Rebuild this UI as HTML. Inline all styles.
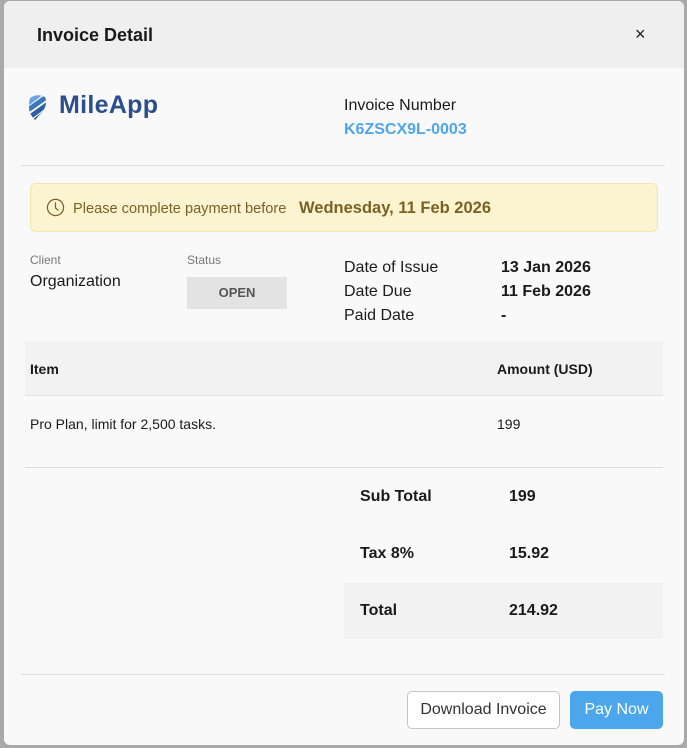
<!DOCTYPE html>
<html><head><meta charset="utf-8"><style>
*{margin:0;padding:0;box-sizing:border-box}
body{width:687px;height:748px;background:#a9a9a9;font-family:"Liberation Sans",sans-serif;position:relative;overflow:hidden;color:#1a1a1a}
.m{position:absolute;left:4px;top:1px;width:680px;height:744px;background:#f9f9f9;border-radius:6px;overflow:hidden}
.a{position:absolute;white-space:nowrap}
.hd{position:absolute;left:0;top:0;width:680px;height:67px;background:#efefef}
.hr{position:absolute;height:1px;background:#dcdcdc}
</style></head><body>
<div class="m">
<div class="hd"></div>
<div class="a" style="left:33px;top:24px;font-size:18px;font-weight:bold">Invoice Detail</div>
<div class="a" style="left:631px;top:23px;font-size:18px">×</div>
<svg class="a" style="left:24px;top:93px" width="20" height="27" viewBox="0 0 20 27">
<defs><clipPath id="c"><path d="M2 4 Q9 -1 17 3 Q20 9 15 17 L7 26 Q1 20 1 13 Q1 7 2 4Z"/></clipPath></defs>
<g clip-path="url(#c)">
<path d="M-4 8 L12 -4 L16 0 L0 12Z" fill="#6aa3dd"/>
<path d="M-3 15 L17 1 L20 5 L0 19Z" fill="#3d76bd"/>
<path d="M-1 22 L20 7 L22 11 L2 26Z" fill="#2d5da3"/>
<path d="M2 28 L20 13 L23 17 L5 31Z" fill="#23498a"/>
</g></svg>
<div class="a" style="left:55px;top:90px;font-size:25px;font-weight:bold;color:#2b4f8c;letter-spacing:0.3px">MileApp</div>
<div class="a" style="left:340px;top:96px;font-size:16px">Invoice Number</div>
<div class="a" style="left:340px;top:120px;font-size:16px;font-weight:bold;color:#4da6ec">K6ZSCX9L-0003</div>
<div class="hr" style="left:17px;top:164px;width:644px"></div>
<div class="a" style="left:26px;top:182px;width:628px;height:49px;background:#fcf3d0;border:1px solid #f4e6b0;border-radius:6px"></div>
<svg class="a" style="left:42px;top:197px" width="19" height="19" viewBox="0 0 20 20"><circle cx="10" cy="10" r="8.5" fill="none" stroke="#7a6226" stroke-width="1.3"/><path d="M10 4.5V10.5L13 13" fill="none" stroke="#7a6226" stroke-width="1.3"/></svg>
<div class="a" style="left:69px;top:200px;font-size:14.6px;color:#7a6226">Please complete payment before</div>
<div class="a" style="left:295px;top:198px;font-size:16.5px;font-weight:bold;color:#7a6226">Wednesday, 11 Feb 2026</div>
<div class="a" style="left:26px;top:252px;font-size:12px;color:#777">Client</div>
<div class="a" style="left:26px;top:272px;font-size:16px">Organization</div>
<div class="a" style="left:183px;top:252px;font-size:12px;color:#777">Status</div>
<div class="a" style="left:183px;top:276px;width:100px;height:32px;background:#e3e3e3;font-size:13px;font-weight:bold;color:#555;text-align:center;line-height:32px">OPEN</div>
<div class="a" style="left:340px;top:255px;font-size:16px;line-height:24px">Date of Issue<br>Date Due<br>Paid Date</div>
<div class="a" style="left:497px;top:255px;font-size:16px;line-height:24px;font-weight:bold">13 Jan 2026<br>11 Feb 2026<br>-</div>
<div class="a" style="left:21px;top:340px;width:638px;height:55px;background:#f2f2f2;border-bottom:1px solid #e2e2e2"></div>
<div class="a" style="left:26px;top:360px;font-size:14px;font-weight:bold">Item</div>
<div class="a" style="left:493px;top:360px;font-size:14px;font-weight:bold">Amount (USD)</div>
<div class="a" style="left:26px;top:415px;font-size:14px">Pro Plan, limit for 2,500 tasks.</div>
<div class="a" style="left:493px;top:415px;font-size:14px">199</div>
<div class="hr" style="left:21px;top:466px;width:638px"></div>
<div class="a" style="left:356px;top:487px;font-size:16px;font-weight:bold">Sub Total</div>
<div class="a" style="left:505px;top:487px;font-size:16px;font-weight:bold">199</div>
<div class="a" style="left:356px;top:544px;font-size:16px;font-weight:bold">Tax 8%</div>
<div class="a" style="left:505px;top:544px;font-size:16px;font-weight:bold">15.92</div>
<div class="a" style="left:340px;top:582px;width:319px;height:56px;background:#f2f2f2"></div>
<div class="a" style="left:356px;top:601px;font-size:16px;font-weight:bold">Total</div>
<div class="a" style="left:505px;top:601px;font-size:16px;font-weight:bold">214.92</div>
<div class="hr" style="left:17px;top:673px;width:644px"></div>
<div class="a" style="left:403px;top:690px;width:153px;height:38px;border:1px solid #c4c4c4;border-radius:5px;background:#fff;font-size:16px;color:#333;text-align:center;line-height:36px">Download Invoice</div>
<div class="a" style="left:566px;top:690px;width:93px;height:38px;border-radius:5px;background:#4ca6ec;font-size:16px;color:#fff;text-align:center;line-height:38px">Pay Now</div>
</div>
</body></html>
